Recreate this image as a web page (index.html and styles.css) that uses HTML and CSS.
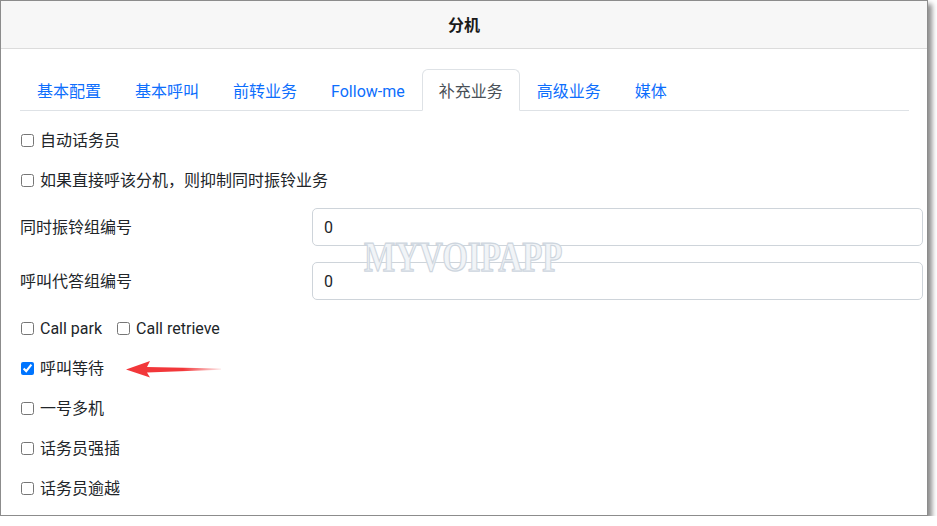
FILE: index.html
```html
<!DOCTYPE html>
<html lang="zh">
<head>
<meta charset="utf-8">
<title>分机</title>
<link rel="stylesheet" href="styles.css">
</head>
<body>
<div class="window">
  <div class="header">分机</div>
  <div class="content">
    <ul class="tabs">
      <li class="tab">基本配置</li>
      <li class="tab">基本呼叫</li>
      <li class="tab">前转业务</li>
      <li class="tab">Follow-me</li>
      <li class="tab active">补充业务</li>
      <li class="tab">高级业务</li>
      <li class="tab">媒体</li>
    </ul>
    <form class="form">
      <div class="row"><label class="check"><input type="checkbox"><span class="txt">自动话务员</span></label></div>
      <div class="row"><label class="check"><input type="checkbox"><span class="txt">如果直接呼该分机，则抑制同时振铃业务</span></label></div>
      <div class="field"><span class="label">同时振铃组编号</span><input class="text" type="text" value="0"></div>
      <div class="field"><span class="label">呼叫代答组编号</span><input class="text" type="text" value="0"></div>
      <div class="row inline"><label class="check"><input type="checkbox"><span class="txt">Call park</span></label><label class="check"><input type="checkbox"><span class="txt">Call retrieve</span></label></div>
      <div class="row"><label class="check"><input type="checkbox" checked><span class="txt">呼叫等待</span></label></div>
      <div class="row"><label class="check"><input type="checkbox"><span class="txt">一号多机</span></label></div>
      <div class="row"><label class="check"><input type="checkbox"><span class="txt">话务员强插</span></label></div>
      <div class="row"><label class="check"><input type="checkbox"><span class="txt">话务员逾越</span></label></div>
    </form>
  </div>
  <div class="watermark">MYVOIPAPP</div>
  <svg class="arrow" width="105" height="28" viewBox="0 0 105 28">
    <defs>
      <linearGradient id="fade" x1="0" y1="0" x2="1" y2="0">
        <stop offset="0" stop-color="#f2373a"/>
        <stop offset="0.6" stop-color="#f2373a"/>
        <stop offset="1" stop-color="#f2373a" stop-opacity="0.1"/>
      </linearGradient>
    </defs>
    <polygon points="5,13.5 29,5 26,11 100,12.6 100,13.8 26,16.5 29,21.5" fill="url(#fade)"/>
  </svg>
</div>
</body>
</html>
```
FILE: styles.css
```css
html, body {
  margin: 0;
  padding: 0;
  background: #ffffff;
}
body {
  font-family: Roboto, "Noto Sans CJK SC", sans-serif;
  font-size: 16px;
  color: #212529;
}
.window {
  position: relative;
  box-sizing: border-box;
  width: 928px;
  height: 516px;
  border: 1px solid #8c8c8c;
  background: #ffffff;
  box-shadow: 4px 4px 5px rgba(0, 0, 0, 0.45);
  overflow: hidden;
}
.header {
  box-sizing: border-box;
  height: 48px;
  padding-top: 2px;
  background: #f7f7f7;
  border-bottom: 1px solid #dcdcdc;
  text-align: center;
  font-weight: bold;
  font-size: 16px;
  line-height: 45px;
  color: #1a1a1a;
}
.content {
  padding: 20px 4px 0 19px;
}
.tabs {
  list-style: none;
  margin: 0 14px 0 0;
  padding: 0;
  display: flex;
  border-bottom: 1px solid #dee2e6;
}
.tab {
  padding: 10px 16px 6px;
  line-height: 24px;
  border: 1px solid transparent;
  border-top-left-radius: 6px;
  border-top-right-radius: 6px;
  margin-bottom: -1px;
  color: #0d6efd;
  white-space: nowrap;
}
.tab.active {
  color: #495057;
  background: #ffffff;
  border-color: #dee2e6 #dee2e6 #ffffff;
}
.form {
  margin-top: 17px;
  display: flex;
  flex-direction: column;
  gap: 16px;
}
.row {
  display: flex;
  align-items: center;
  height: 24px;
  padding-left: 1px;
}
.row.inline {
  gap: 15px;
}
.check {
  display: flex;
  align-items: center;
  gap: 6px;
  line-height: 24px;
}
.check input {
  margin: 0;
  width: 13px;
  height: 13px;
}
.txt {
  padding-top: 2px;
}
.field {
  display: grid;
  grid-template-columns: 292px 1fr;
  align-items: center;
}
.label {
  line-height: 24px;
  padding-top: 2px;
}
.text {
  box-sizing: border-box;
  height: 38px;
  width: 100%;
  border: 1px solid #ced4da;
  border-radius: 5px;
  padding: 0 11px;
  font-family: Roboto, "Noto Sans CJK SC", sans-serif;
  font-size: 16px;
  color: #212529;
  background: #ffffff;
}
.watermark {
  position: absolute;
  left: 363px;
  top: 236px;
  font-family: "Liberation Serif", serif;
  font-weight: bold;
  font-size: 33px;
  line-height: 40px;
  color: #f1f4f7;
  -webkit-text-stroke: 1px #cdd5de;
  transform: scaleY(1.25);
  transform-origin: left center;
  pointer-events: none;
}
.arrow {
  position: absolute;
  left: 120px;
  top: 355px;
}
```
